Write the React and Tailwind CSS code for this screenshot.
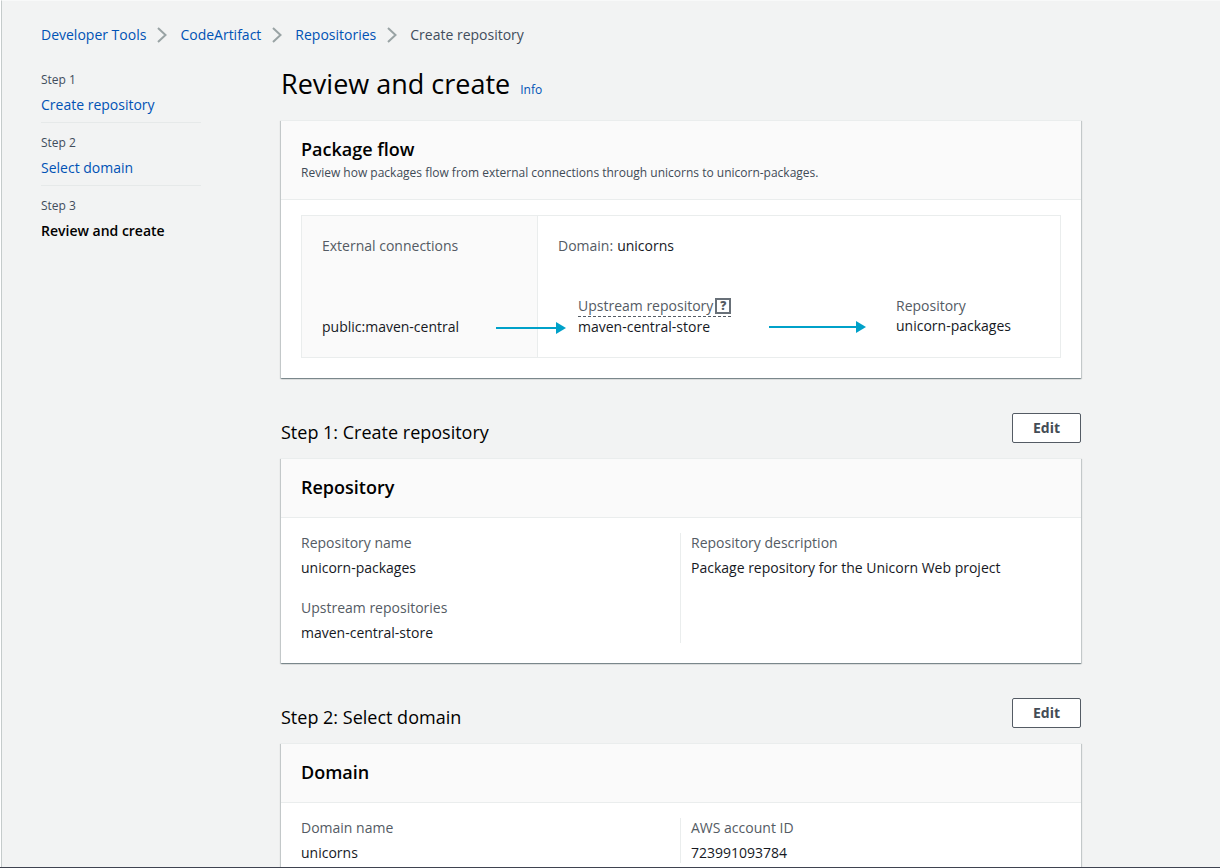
import React from "react";

const crumbs = ["Developer Tools", "CodeArtifact", "Repositories"];

const steps = [
  { label: "Step 1", title: "Create repository" },
  { label: "Step 2", title: "Select domain" },
  { label: "Step 3", title: "Review and create", current: true },
];

function Chevron() {
  return (
    <svg className="h-4 w-[34px]" viewBox="2 0 34 16" fill="none" stroke="#99a3a4" strokeWidth="2" aria-hidden="true">
      <path d="M14 1 L21.5 8 L14 15" />
    </svg>
  );
}

function Arrow({ length, className }) {
  return (
    <svg
      className={className}
      width={length}
      height="12"
      viewBox={`0 0 ${length} 12`}
      fill="#00a1c9"
      aria-hidden="true"
    >
      <rect x="0" y="5" width={length - 8} height="2" />
      <path d={`M${length - 10} 0 L${length} 6 L${length - 10} 12 Z`} />
    </svg>
  );
}

function Panel({ title, description, children }) {
  return (
    <section className="border-t border-[#eaeded] bg-white shadow-[0_1px_1px_0_rgba(0,28,36,0.3),1px_1px_1px_0_rgba(0,28,36,0.15),-1px_1px_1px_0_rgba(0,28,36,0.15)]">
      <header className="border-b border-[#eaeded] bg-[#fafafa] px-5 py-4">
        <h3 className="mb-[2px] text-lg leading-6 font-semibold text-black">{title}</h3>
        {description && <p className="text-xs leading-5 text-[#3f4b57]">{description}</p>}
      </header>
      {children}
    </section>
  );
}

function StepHeading({ children }) {
  return (
    <div className="mt-[35px] mb-[15px] flex items-start justify-between">
      <h2 className="pt-2 text-lg leading-[22px] text-black">{children}</h2>
      <button
        type="button"
        className="h-[30px] rounded-[2px] border border-[#545b64] bg-white px-5 text-sm leading-5 font-bold text-[#444c55]"
      >
        Edit
      </button>
    </div>
  );
}

function Field({ label, value }) {
  return (
    <div>
      <dt className="leading-5 text-[#545b64]">{label}</dt>
      <dd className="mt-[5px] leading-5 text-[#16191f]">{value}</dd>
    </div>
  );
}

function Details({ left, right }) {
  return (
    <div className="grid grid-cols-2 px-5 pt-[15px] pb-5">
      <dl className="flex flex-col gap-5">
        {left.map((f) => (
          <Field key={f.label} {...f} />
        ))}
      </dl>
      <dl className="-ml-px flex flex-col gap-5 border-l border-[#eaeded] pl-[10px]">
        {right.map((f) => (
          <Field key={f.label} {...f} />
        ))}
      </dl>
    </div>
  );
}

function PackageFlow() {
  return (
    <div className="px-5 pt-[15px] pb-5">
      <div className="relative flex border border-[#eaeded] leading-5">
        <div className="flex w-[236px] flex-col justify-between border-r border-[#eaeded] bg-[#fafafa] p-5 text-[#16191f]">
          <h4 className="text-[#545b64]">External connections</h4>
          <p>public:maven-central</p>
        </div>
        <Arrow length={70} className="absolute bottom-[23px] left-[194px]" />
        <div className="flex-1 p-5 text-[#16191f]">
          <h4 className="flex gap-1">
            <span className="text-[#545b64]">Domain:</span>
            <span>unicorns</span>
          </h4>
          <div className="mt-10 flex items-start px-5">
            <div className="w-[191px]">
              <div className="flex">
                <span className="flex items-center gap-[2px] border-b border-dashed border-[#545b64] whitespace-nowrap text-[#545b64]">
                  Upstream repository
                  <button
                    type="button"
                    aria-label="About upstream repositories"
                    className="flex h-4 w-4 items-center justify-center border-2 border-[#687078] text-xs leading-none font-extrabold"
                  >
                    ?
                  </button>
                </span>
              </div>
              <p>maven-central-store</p>
            </div>
            <Arrow length={97} className="mt-[25px]" />
            <div className="ml-[30px]">
              <h5 className="text-[#545b64]">Repository</h5>
              <p>unicorn-packages</p>
            </div>
          </div>
        </div>
      </div>
    </div>
  );
}

export default function App() {
  return (
    <div className="h-screen overflow-hidden border-b border-[#3f4350] bg-white pl-px font-['Open_Sans','Noto_Sans',sans-serif] text-sm">
      <div className="h-full overflow-y-auto border-t border-l border-t-[#f8f9f9] border-l-[#c5cbcb] bg-[#f2f3f3] pr-5 pl-[39px] [scrollbar-width:none]">
        <nav aria-label="Breadcrumb" className="pt-6">
          <ol className="flex h-5 items-center leading-5">
            {crumbs.map((c) => (
              <li key={c} className="flex items-center">
                <a href="#" className="text-[#0052b5]">
                  {c}
                </a>
                <Chevron />
              </li>
            ))}
            <li className="text-[#414d5c]">Create repository</li>
          </ol>
        </nav>

        <div className="flex gap-20 pt-[25px]">
          <nav aria-label="Steps" className="w-40 shrink-0">
            <ol>
              {steps.map((s) => (
                <li key={s.label} className="mb-[10px] border-b border-[#e6e9e9] pb-[7px] last:border-b-0">
                  <div className="text-xs leading-5 text-[#414d5c]">{s.label}</div>
                  {s.current ? (
                    <div className="mt-[5px] leading-5 font-semibold text-black">{s.title}</div>
                  ) : (
                    <a href="#" className="mt-[5px] block leading-5 text-[#0052b5]">
                      {s.title}
                    </a>
                  )}
                </li>
              ))}
            </ol>
          </nav>

          <main className="max-w-[800px] flex-1">
            <div className="flex items-baseline gap-[10px] pb-[22px]">
              <h1 className="text-[27px] leading-7 text-black">Review and create</h1>
              <a href="#" className="text-xs text-[#0052b5]">
                Info
              </a>
            </div>

            <Panel
              title="Package flow"
              description="Review how packages flow from external connections through unicorns to unicorn-packages."
            >
              <PackageFlow />
            </Panel>

            <StepHeading>Step 1: Create repository</StepHeading>
            <Panel title="Repository">
              <Details
                left={[
                  { label: "Repository name", value: "unicorn-packages" },
                  { label: "Upstream repositories", value: "maven-central-store" },
                ]}
                right={[
                  {
                    label: "Repository description",
                    value: "Package repository for the Unicorn Web project",
                  },
                ]}
              />
            </Panel>

            <StepHeading>Step 2: Select domain</StepHeading>
            <Panel title="Domain">
              <Details
                left={[{ label: "Domain name", value: "unicorns" }]}
                right={[{ label: "AWS account ID", value: "723991093784" }]}
              />
            </Panel>
          </main>
        </div>
      </div>
    </div>
  );
}
